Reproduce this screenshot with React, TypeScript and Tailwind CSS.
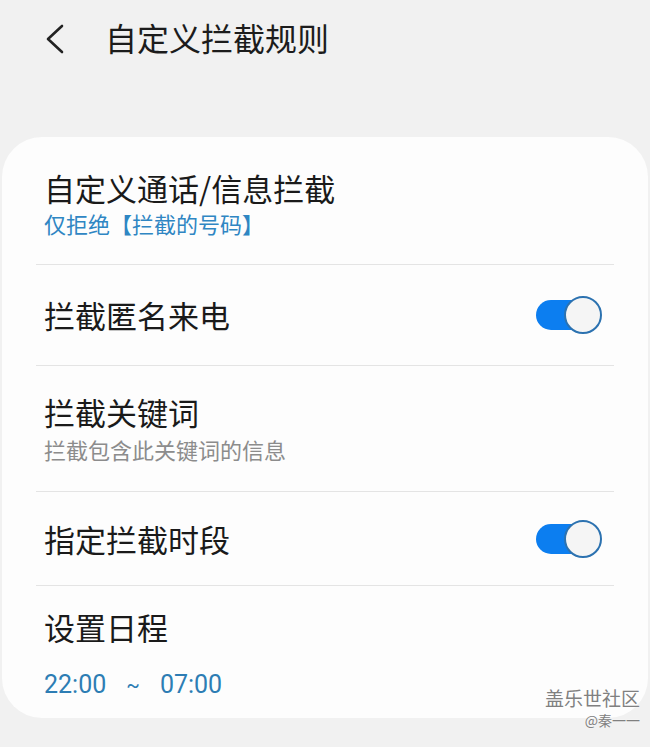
import React from 'react';

const CJK = { fontFamily: '"Noto Sans CJK SC", "Noto Sans", sans-serif' };

function Toggle() {
  return (
    <div className="relative w-[66px] h-[38px] shrink-0">
      <div className="absolute left-0 top-[4px] w-[56px] h-[30px] rounded-full bg-[#0c7ef0]" />
      <div className="absolute right-0 top-0 w-[38px] h-[38px] rounded-full bg-[#f5f5f5] border-2 border-[#2c72b0]" />
    </div>
  );
}

function Divider() {
  return <div className="h-px bg-[#e4e4e4]" />;
}

export default function App() {
  return (
    <div className="relative h-[747px] w-[650px] overflow-hidden bg-[#f1f1f1]" style={CJK}>
      <div className="flex h-[74px] items-center pl-[45px]">
        <svg width="20" height="30" viewBox="0 0 20 30" fill="none" className="mt-[3px]">
          <path d="M17 2 L3 15 L17 28" stroke="#222" strokeWidth="2.6" strokeLinecap="round" strokeLinejoin="round" />
        </svg>
        <h1 className="ml-[40px] text-[32px] leading-[40px] font-normal text-[#1c1c1c]">自定义拦截规则</h1>
      </div>

      <div className="mx-[2px] mt-[63px] h-[581px] rounded-[40px] bg-[#fdfdfd]">
        <div className="mx-[34px]">
          <div className="px-[8px] pt-[33px] pb-[26px]">
            <div className="text-[31px] leading-[36px] text-[#1a1a1a]">自定义通话/信息拦截</div>
            <div className="mt-[2px] text-[22px] leading-[30px] text-[#2f86c3]">仅拒绝【拦截的号码】</div>
          </div>
          <Divider />

          <div className="flex h-[100px] items-center justify-between pl-[8px] pr-[12px]">
            <div className="text-[31px] leading-[36px] text-[#1a1a1a]">拦截匿名来电</div>
            <Toggle />
          </div>
          <Divider />

          <div className="flex h-[125px] flex-col justify-center px-[8px]">
            <div className="text-[31px] leading-[36px] text-[#1a1a1a]">拦截关键词</div>
            <div className="mt-[4px] text-[22px] leading-[30px] text-[#8c8c8c]">拦截包含此关键词的信息</div>
          </div>
          <Divider />

          <div className="flex h-[93px] items-center justify-between pl-[8px] pr-[12px]">
            <div className="text-[31px] leading-[36px] text-[#1a1a1a]">指定拦截时段</div>
            <Toggle />
          </div>
          <Divider />

          <div className="px-[8px] pt-[23px]">
            <div className="text-[31px] leading-[36px] text-[#1a1a1a]">设置日程</div>
            <div
              className="mt-[25px] flex items-center gap-[20px] text-[25px] leading-[30px] text-[#2d7db4]"
              style={{ fontFamily: 'Roboto, "Liberation Sans", sans-serif' }}
            >
              <span>22:00</span>
              <span className="text-[20px]">~</span>
              <span>07:00</span>
            </div>
          </div>
        </div>
      </div>

      <div className="absolute right-[10px] top-[686px] flex flex-col items-end text-[#808080] [text-shadow:0_0_2px_#fff]">
        <span className="text-[19px] leading-[24px]">盖乐世社区</span>
        <span className="text-[14px] leading-[20px]">@秦一一</span>
      </div>
    </div>
  );
}
